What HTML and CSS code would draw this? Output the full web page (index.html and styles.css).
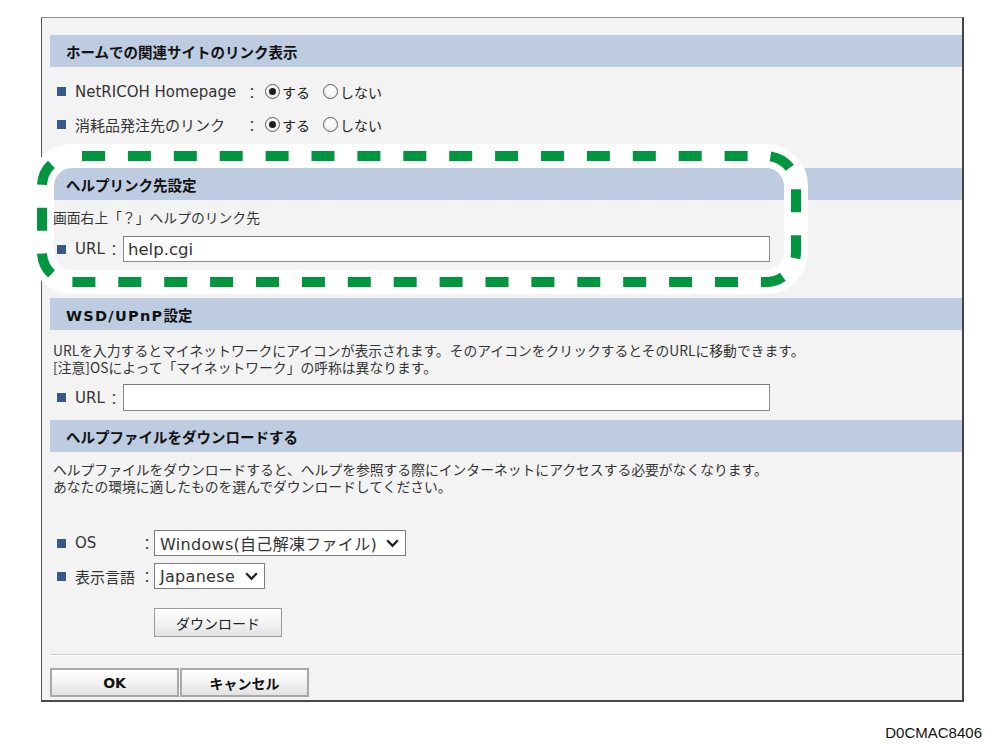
FILE: index.html
```html
<!DOCTYPE html>
<html lang="ja">
<head>
<meta charset="utf-8">
<title>Web Image Monitor</title>
<link rel="stylesheet" href="styles.css">
</head>
<body>
<div class="page">
  <div class="frame">
    <div class="sec-head"><span>ホームでの関連サイトのリンク表示</span></div>
    <div class="rows1">
      <div class="row">
        <span class="bullet"></span><span class="label w-link">NetRICOH Homepage</span><span class="colon">：</span>
        <span class="radio on"></span><span class="opt">する</span>
        <span class="radio"></span><span class="opt">しない</span>
      </div>
      <div class="row">
        <span class="bullet"></span><span class="label w-link">消耗品発注先のリンク</span><span class="colon">：</span>
        <span class="radio on"></span><span class="opt">する</span>
        <span class="radio"></span><span class="opt">しない</span>
      </div>
    </div>

    <div class="sec-head h2"><span>ヘルプリンク先設定</span></div>
    <p class="note one">画面右上「？」ヘルプのリンク先</p>
    <div class="row url-row r2">
      <span class="bullet"></span><span class="label w-url">URL</span><span class="colon">：</span>
      <div class="input">help.cgi</div>
    </div>

    <div class="sec-head h3"><span><span class="latin-head">WSD/UPnP</span>設定</span></div>
    <div class="note two">
      <div class="line">URLを入力するとマイネットワークにアイコンが表示されます。そのアイコンをクリックするとそのURLに移動できます。</div>
      <div class="line">[注意]OSによって「マイネットワーク」の呼称は異なります。</div>
    </div>
    <div class="row url-row r3">
      <span class="bullet"></span><span class="label w-url">URL</span><span class="colon">：</span>
      <div class="input tall"></div>
    </div>

    <div class="sec-head h4"><span>ヘルプファイルをダウンロードする</span></div>
    <div class="note two t4">
      <div class="line">ヘルプファイルをダウンロードすると、ヘルプを参照する際にインターネットにアクセスする必要がなくなります。</div>
      <div class="line">あなたの環境に適したものを選んでダウンロードしてください。</div>
    </div>
    <div class="row sel-row os">
      <span class="bullet"></span><span class="label w-os">OS</span><span class="colon">：</span>
      <div class="select sel-os"><span class="sel-text">Windows(自己解凍ファイル)</span>
        <svg class="chev" width="13" height="9" viewBox="0 0 13 9"><polyline points="1.2,1.2 6.5,6.8 11.8,1.2" fill="none" stroke="#222" stroke-width="2.3"/></svg>
      </div>
    </div>
    <div class="row sel-row lang">
      <span class="bullet"></span><span class="label w-os">表示言語</span><span class="colon">：</span>
      <div class="select sel-lang"><span class="sel-text">Japanese</span>
        <svg class="chev" width="13" height="9" viewBox="0 0 13 9"><polyline points="1.2,1.2 6.5,6.8 11.8,1.2" fill="none" stroke="#222" stroke-width="2.3"/></svg>
      </div>
    </div>
    <div class="dl-wrap"><div class="btn dl">ダウンロード</div></div>
    <div class="sep"></div>
    <div class="actions">
      <div class="btn act">OK</div>
      <div class="btn act">キャンセル</div>
    </div>
  </div>
  <div class="code">D0CMAC8406</div>

  <svg class="callout" width="993" height="745" viewBox="0 0 993 745">
    <rect x="42" y="156" width="754" height="126" rx="30" ry="30" fill="none" stroke="#ffffff" stroke-width="24"/>
    <rect x="42" y="156" width="754" height="126" rx="30" ry="30" fill="none" stroke="#009640" stroke-width="10" stroke-dasharray="23 22.9" stroke-dashoffset="-10"/>
  </svg>
</div>
</body>
</html>
```

FILE: styles.css
```css
html, body {
  margin: 0;
  padding: 0;
  background: #ffffff;
}

body {
  font-family: "DejaVu Sans", "Noto Sans CJK JP", sans-serif;
  font-size: 14px;
  color: #333333;
}

.page {
  position: relative;
  width: 993px;
  height: 745px;
  overflow: hidden;
}

.frame {
  box-sizing: border-box;
  margin-left: 41px;
  margin-top: 17px;
  width: 923px;
  height: 685px;
  border: 1px solid #5a5a5a;
  border-top: 1px solid #8c8c8c;
  border-right: 2px solid #444444;
  border-bottom: 2px solid #4a4a4a;
  background: #f3f3f3;
  padding: 17px 0 0 8px;
}

.sec-head {
  height: 32px;
  background: #bdcce1;
  color: #111111;
  font-weight: bold;
  font-size: 14.5px;
  padding-left: 16px;
  display: flex;
  align-items: center;
  font-family: "DejaVu Sans", "Noto Sans CJK JP", sans-serif;
}

.latin-head {
  font-size: 14.5px;
  letter-spacing: 1.3px;
}

.h2 { margin-top: 27px; }
.h3 { margin-top: 36px; }
.h4 { margin-top: 9px; }

.rows1 { margin-top: 8px; }

.row {
  display: flex;
  align-items: center;
  padding-left: 7px;
  height: 33px;
}

.bullet {
  width: 9px;
  height: 9px;
  background: #36598a;
  margin-right: 9px;
  flex: none;
}

.label {
  color: #333333;
  white-space: nowrap;
  font-size: 15px;
  flex: none;
}

.w-link { width: 170px; }
.w-url { width: 32px; }
.w-os { width: 65px; }

.colon {
  width: 14px;
  text-align: center;
  font-family: "Noto Sans CJK JP", sans-serif;
  color: #333333;
  flex: none;
}

.radio {
  box-sizing: border-box;
  width: 15px;
  height: 15px;
  border-radius: 50%;
  border: 1px solid #5e5e5e;
  background: radial-gradient(circle at 50% 40%, #ffffff 0%, #f2f2f2 60%, #d8d8d8 100%);
  margin-left: 6px;
  margin-right: 2px;
  display: flex;
  align-items: center;
  justify-content: center;
  flex: none;
}

.radio + .opt + .radio { margin-left: 13px; }

.radio.on::after {
  content: "";
  width: 7px;
  height: 7px;
  border-radius: 50%;
  background: #1e1e1e;
}

.opt {
  font-family: "Noto Sans CJK JP", sans-serif;
  color: #222222;
}

.note {
  margin: 0;
  padding-left: 3px;
  font-family: "Noto Sans CJK JP", sans-serif;
  font-size: 13.8px;
  color: #333333;
  letter-spacing: 0;
}

.note.one {
  margin-top: 8px;
  line-height: 18px;
}

.note.two {
  margin-top: 12px;
}

.note .line {
  height: 17px;
  line-height: 17px;
  white-space: nowrap;
}

.note.two.t4 { margin-top: 9px; }

.url-row { height: 26px; }
.r2 { margin-top: 10px; }
.r3 { margin-top: 8px; height: 27px; }

.input {
  box-sizing: border-box;
  margin-left: 2px;
  width: 647px;
  height: 26px;
  background: #ffffff;
  border: 1px solid #8a8a8a;
  border-top-color: #7a7a7a;
  padding-left: 4px;
  display: flex;
  align-items: center;
  font-size: 16.5px;
  color: #333333;
}

.input.tall { height: 27px; }

.sel-row { height: 26px; }
.os { margin-top: 35px; }
.lang { margin-top: 7px; }

.select {
  box-sizing: border-box;
  height: 26px;
  background: #ffffff;
  border: 1px solid #7d7d7d;
  display: flex;
  align-items: center;
  padding-left: 5px;
  font-size: 16px;
  color: #333333;
  flex: none;
}

.sel-os { width: 252px; }
.sel-lang { width: 111px; }

.sel-text {
  white-space: nowrap;
  letter-spacing: 0.3px;
}

.chev {
  margin-left: auto;
  margin-right: 6px;
  flex: none;
}

.dl-wrap {
  margin-top: 19px;
  padding-left: 104px;
  height: 29px;
}

.btn {
  box-sizing: border-box;
  display: flex;
  align-items: center;
  justify-content: center;
  background: linear-gradient(#fefefe 0%, #f3f3f3 50%, #e2e2e2 100%);
  border: 1px solid #9a9a9a;
  color: #222222;
  font-family: "Noto Sans CJK JP", sans-serif;
  font-size: 14px;
}

.dl {
  width: 128px;
  height: 29px;
}

.sep {
  margin-top: 17px;
  height: 1px;
  background: #cfcfcf;
  border-bottom: 1px solid #ffffff;
}

.actions {
  margin-top: 12px;
  display: flex;
  gap: 1px;
}

.act {
  width: 129px;
  height: 29px;
  font-weight: bold;
  color: #111111;
  border: 2px solid #a8a8a8;
  font-family: "DejaVu Sans", "Noto Sans CJK JP", sans-serif;
}

.code {
  margin-top: 22px;
  padding-right: 11px;
  text-align: right;
  font-family: "Liberation Sans", Arial, sans-serif;
  font-size: 15px;
  line-height: 18px;
  color: #111111;
}

.callout {
  position: absolute;
  left: 0;
  top: 0;
  pointer-events: none;
}
```
